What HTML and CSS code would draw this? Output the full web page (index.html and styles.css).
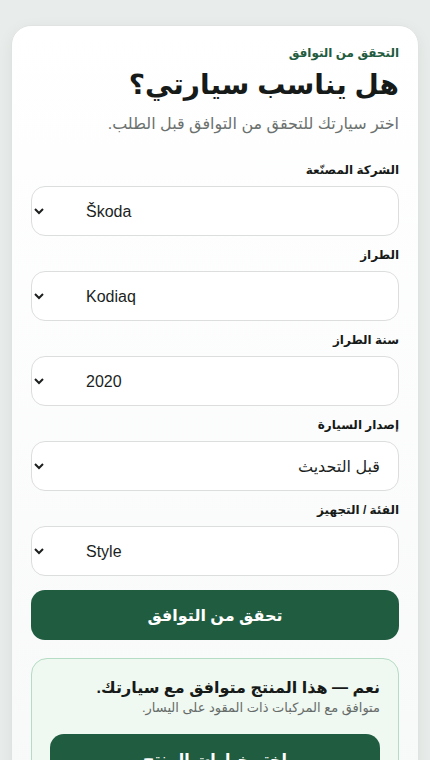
FILE: index.html
```html
<!DOCTYPE html>
<html lang="ar" dir="rtl">
 <head>
  <meta charset="utf-8">
  <title>التحقق من التوافق</title>
  <link rel="stylesheet" href="styles.css">
 </head>
 <body>
  <div class="card">
   <div class="eyebrow">التحقق من التوافق</div>
   <h1 class="title">هل يناسب سيارتي؟</h1>
   <p class="lead">اختر سيارتك للتحقق من التوافق قبل الطلب.</p>

   <form class="fit-form">
    <label class="field">
     <span class="field-label">الشركة المصنّعة</span>
     <select class="field-select">
      <option dir="ltr">Škoda</option>
     </select>
    </label>
    <label class="field">
     <span class="field-label">الطراز</span>
     <select class="field-select">
      <option dir="ltr">Kodiaq</option>
     </select>
    </label>
    <label class="field">
     <span class="field-label">سنة الطراز</span>
     <select class="field-select">
      <option dir="ltr">2020</option>
     </select>
    </label>
    <label class="field">
     <span class="field-label">إصدار السيارة</span>
     <select class="field-select">
      <option>قبل التحديث</option>
     </select>
    </label>
    <label class="field">
     <span class="field-label">الفئة / التجهيز</span>
     <select class="field-select">
      <option dir="ltr">Style</option>
     </select>
    </label>
    <button type="button" class="btn btn-check">تحقق من التوافق</button>
   </form>

   <div class="result">
    <div class="result-title">نعم — هذا المنتج متوافق مع سيارتك.</div>
    <div class="result-note">متوافق مع المركبات ذات المقود على اليسار.</div>
    <button type="button" class="btn btn-inner">اختر خيارات المنتج</button>
   </div>
  </div>
 </body>
</html>
```

FILE: styles.css
```css
body {
    margin: 0;
    padding: 25px 11px;
    background: #e8ecea;
    font-family: "Liberation Sans", "DejaVu Sans", sans-serif;
    color: #161a18;
}

.card {
    background: linear-gradient(180deg, #ffffff 0%, #f7f9f8 100%);
    border: 1px solid #dfe3e1;
    border-radius: 20px;
    padding: 19px 19px 24px;
    box-shadow: 0 4px 16px rgba(30, 50, 40, 0.06);
}

.eyebrow {
    font-size: 12px;
    font-weight: bold;
    color: #1f5c40;
    line-height: 16px;
}

.title {
    margin: 6px 0 0;
    font-size: 28px;
    line-height: 36px;
    font-weight: bold;
}

.lead {
    margin: 10px 0 0;
    font-size: 16px;
    line-height: 22px;
    color: #6b716e;
}

.fit-form {
    margin-top: 28px;
    display: flex;
    flex-direction: column;
    gap: 12px;
}

.field {
    display: flex;
    flex-direction: column;
    gap: 8px;
}

.field-label {
    font-size: 12px;
    font-weight: bold;
    line-height: 15px;
}

.field-select {
    height: 50px;
    border: 1px solid #dcdedd;
    border-radius: 14px;
    background: #fff;
    padding: 0 14px 0 38px;
    font-family: inherit;
    font-size: 16px;
    color: #1c1f1e;
}

.btn {
    height: 50px;
    border: none;
    border-radius: 14px;
    background: #1f5c40;
    color: #fff;
    font-family: inherit;
    font-size: 16px;
    font-weight: bold;
    cursor: pointer;
}

.btn-check {
    margin-top: 2px;
}

.result {
    margin-top: 18px;
    background: #eff8f1;
    border: 1px solid #b5dcc4;
    border-radius: 16px;
    padding: 18px 18px 20px;
}

.result-title {
    font-size: 16px;
    font-weight: bold;
    line-height: 22px;
}

.result-note {
    font-size: 13px;
    line-height: 18px;
    color: #666c69;
}

.btn-inner {
    display: block;
    width: 100%;
    margin-top: 17px;
}
```
